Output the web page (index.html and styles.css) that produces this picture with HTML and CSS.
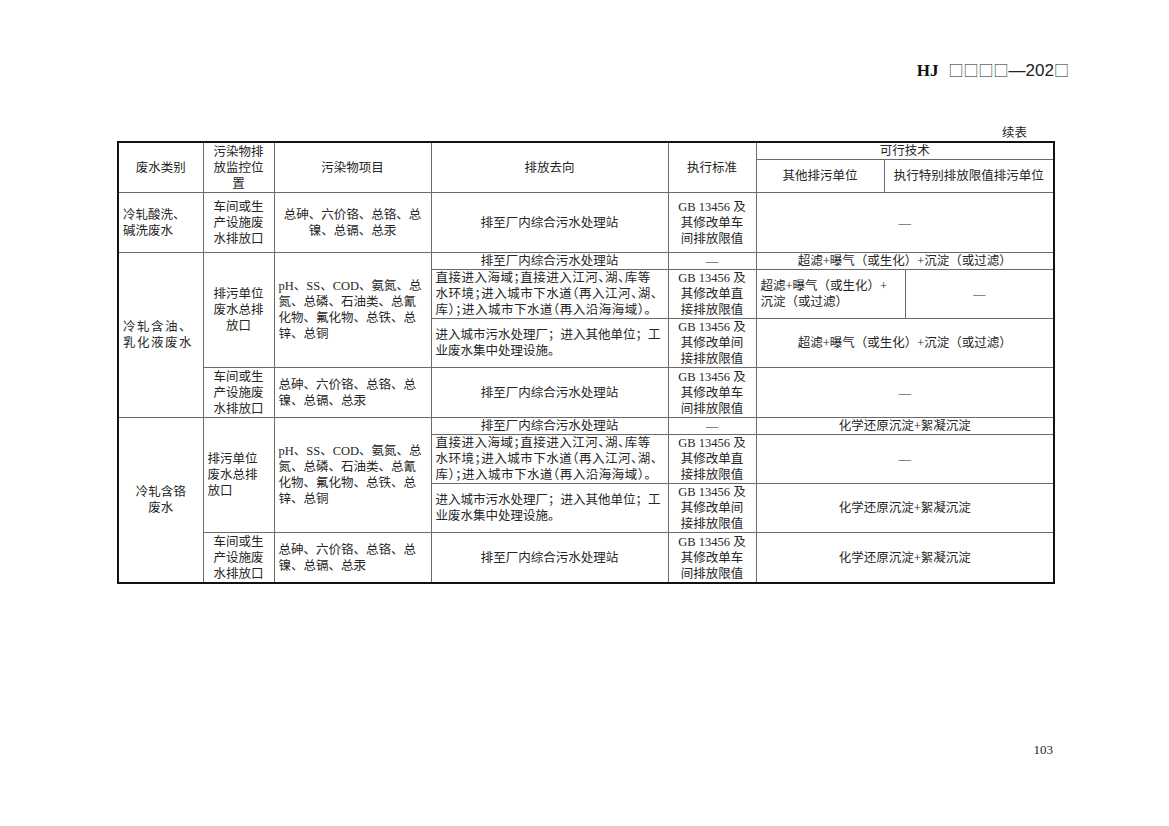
FILE: index.html
```html
<!DOCTYPE html>
<html lang="zh-CN">
<head>
<meta charset="utf-8">
<title>HJ 续表</title>
<link rel="stylesheet" href="styles.css">
</head>
<body>
<div class="page">
  <header class="doc-head"><span class="hj">HJ</span><span class="code"><span class="bx">□□□□</span>—202<span class="bx">□</span></span></header>
  <div class="cont">续表</div>
  <table class="tbl">
    <colgroup>
      <col class="c1"><col class="c2"><col class="c3"><col class="c4"><col class="c5"><col class="c6"><col class="c7a"><col class="c7b">
    </colgroup>
    <thead>
      <tr class="h17">
        <th rowspan="2">废水类别</th>
        <th rowspan="2">污染物排<br>放监控位<br>置</th>
        <th rowspan="2">污染物项目</th>
        <th rowspan="2">排放去向</th>
        <th rowspan="2">执行标准</th>
        <th colspan="3">可行技术</th>
      </tr>
      <tr class="h33">
        <th>其他排污单位</th>
        <th colspan="2">执行特别排放限值排污单位</th>
      </tr>
    </thead>
    <tbody>
      <tr class="h60">
        <td class="l">冷轧酸洗、<br>碱洗废水</td>
        <td>车间或生<br>产设施废<br>水排放口</td>
        <td>总砷、六价铬、总铬、总<br>镍、总镉、总汞</td>
        <td>排至厂内综合污水处理站</td>
        <td>GB 13456 及<br>其修改单车<br>间排放限值</td>
        <td colspan="3">—</td>
      </tr>
    </tbody>
    <tbody>
      <tr class="h17">
        <td rowspan="4" class="l sp">冷轧含油、<br>乳化液废水</td>
        <td rowspan="3">排污单位<br>废水总排<br>放口</td>
        <td rowspan="3" class="l">pH、SS、COD、氨氮、总<br>氮、总磷、石油类、总氰<br>化物、氟化物、总铁、总<br>锌、总铜</td>
        <td>排至厂内综合污水处理站</td>
        <td>—</td>
        <td colspan="3">超滤+曝气（或生化）+沉淀（或过滤）</td>
      </tr>
      <tr class="h49">
        <td class="l halt">直接进入海域；直接进入江河、湖、库等<br>水环境；进入城市下水道（再入江河、湖、<br>库）；进入城市下水道（再入沿海海域）。</td>
        <td>GB 13456 及<br>其修改单直<br>接排放限值</td>
        <td colspan="2" class="l">超滤+曝气（或生化）+<br>沉淀（或过滤）</td>
        <td>—</td>
      </tr>
      <tr class="h49">
        <td class="l">进入城市污水处理厂；进入其他单位；工<br>业废水集中处理设施。</td>
        <td>GB 13456 及<br>其修改单间<br>接排放限值</td>
        <td colspan="3">超滤+曝气（或生化）+沉淀（或过滤）</td>
      </tr>
      <tr class="h50">
        <td>车间或生<br>产设施废<br>水排放口</td>
        <td class="l">总砷、六价铬、总铬、总<br>镍、总镉、总汞</td>
        <td>排至厂内综合污水处理站</td>
        <td>GB 13456 及<br>其修改单车<br>间排放限值</td>
        <td colspan="3">—</td>
      </tr>
    </tbody>
    <tbody>
      <tr class="h17">
        <td rowspan="4">冷轧含铬<br>废水</td>
        <td rowspan="3" class="l">排污单位<br>废水总排<br>放口</td>
        <td rowspan="3" class="l">pH、SS、COD、氨氮、总<br>氮、总磷、石油类、总氰<br>化物、氟化物、总铁、总<br>锌、总铜</td>
        <td>排至厂内综合污水处理站</td>
        <td>—</td>
        <td colspan="3">化学还原沉淀+絮凝沉淀</td>
      </tr>
      <tr class="h49">
        <td class="l halt">直接进入海域；直接进入江河、湖、库等<br>水环境；进入城市下水道（再入江河、湖、<br>库）；进入城市下水道（再入沿海海域）。</td>
        <td>GB 13456 及<br>其修改单直<br>接排放限值</td>
        <td colspan="3">—</td>
      </tr>
      <tr class="h49">
        <td class="l">进入城市污水处理厂；进入其他单位；工<br>业废水集中处理设施。</td>
        <td>GB 13456 及<br>其修改单间<br>接排放限值</td>
        <td colspan="3">化学还原沉淀+絮凝沉淀</td>
      </tr>
      <tr class="h50">
        <td>车间或生<br>产设施废<br>水排放口</td>
        <td class="l">总砷、六价铬、总铬、总<br>镍、总镉、总汞</td>
        <td>排至厂内综合污水处理站</td>
        <td>GB 13456 及<br>其修改单车<br>间排放限值</td>
        <td colspan="3">化学还原沉淀+絮凝沉淀</td>
      </tr>
    </tbody>
  </table>
  <footer class="pno">103</footer>
</div>
</body>
</html>
```
FILE: styles.css
```css
html, body {
  margin: 0;
  padding: 0;
  background: #fff;
}
body {
  color: #262626;
  font-family: "Liberation Serif", "Noto Sans CJK SC", serif;
}
.page {
  width: 1169px;
  height: 826px;
  box-sizing: border-box;
  padding-top: 60px;
  display: flex;
  flex-direction: column;
}
.doc-head {
  display: flex;
  justify-content: flex-end;
  align-items: baseline;
  gap: 10px;
  padding-right: 100px;
  height: 20px;
  line-height: 20px;
  font-size: 17px;
}
.hj {
  font-family: "Liberation Serif", serif;
  font-weight: bold;
  color: #111;
}
.code {
  font-family: "Liberation Sans", sans-serif;
  color: #222;
}
.bx {
  font-family: "Noto Sans CJK SC", sans-serif;
  font-size: 15px;
  font-weight: 300;
}
.cont {
  margin-top: 44px;
  height: 16px;
  line-height: 16px;
  font-size: 12.5px;
  text-align: right;
  padding-right: 142px;
  font-family: "Noto Sans CJK SC", sans-serif;
}
.tbl {
  margin: 1px 0 0 117px;
  width: 936px;
  table-layout: fixed;
  border-collapse: collapse;
  border: 2px solid #111;
  font-size: 12.5px;
  line-height: 16px;
}
.c1 { width: 85px; }
.c2 { width: 71px; }
.c3 { width: 157px; }
.c4 { width: 237px; }
.c5 { width: 88px; }
.c6 { width: 128px; }
.c7a { width: 21px; }
.c7b { width: 149px; }
.tbl th, .tbl td {
  border: 1px solid #6a6a6a;
  padding: 0 4px;
  text-align: center;
  vertical-align: middle;
  font-weight: normal;
  white-space: nowrap;
  overflow: hidden;
}
.tbl td.l { text-align: left; }
.tbl td.sp { letter-spacing: 1.5px; }
.tbl td.halt { font-feature-settings: "halt" 1; letter-spacing: 0.5px; }
.h17 > * { height: 16px; }
.h33 > * { height: 32px; }
.h60 > * { height: 59px; }
.h49 > * { height: 48px; }
.h50 > * { height: 49px; }
.pno {
  margin-top: auto;
  margin-bottom: 68px;
  text-align: right;
  padding-right: 116px;
  font-size: 13px;
  line-height: 16px;
}
```
